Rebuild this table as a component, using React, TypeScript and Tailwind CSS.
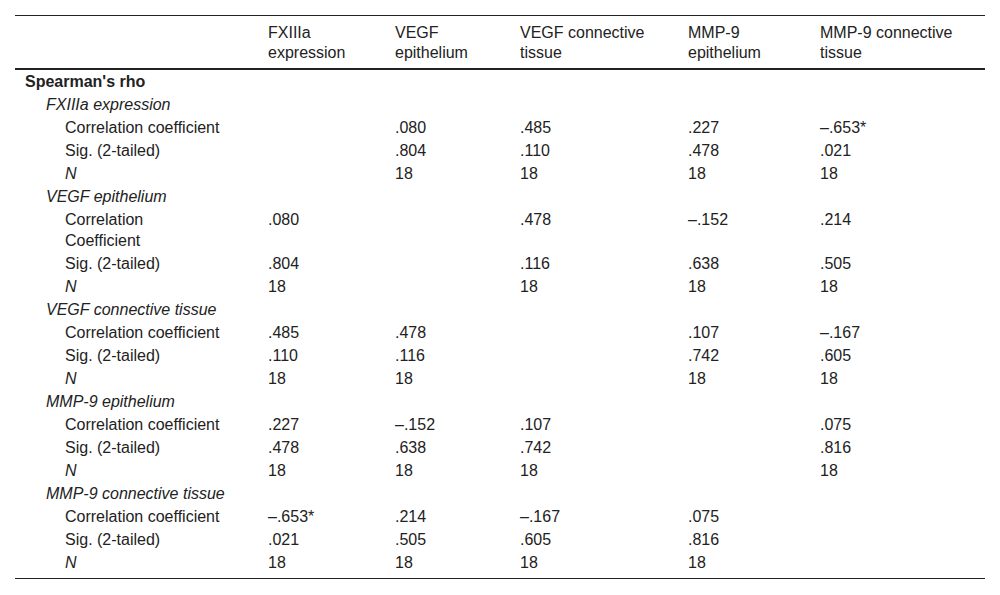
import React from 'react';

type Row = { label: string; italic?: boolean; values: string[] };
type Group = { name: string; rows: Row[] };

const groups: Group[] = [
  {
    name: 'FXIIIa expression',
    rows: [
      { label: 'Correlation coefficient', values: ['', '.080', '.485', '.227', '–.653*'] },
      { label: 'Sig. (2-tailed)', values: ['', '.804', '.110', '.478', '.021'] },
      { label: 'N', italic: true, values: ['', '18', '18', '18', '18'] },
    ],
  },
  {
    name: 'VEGF epithelium',
    rows: [
      { label: 'Correlation\nCoefficient', values: ['.080', '', '.478', '–.152', '.214'] },
      { label: 'Sig. (2-tailed)', values: ['.804', '', '.116', '.638', '.505'] },
      { label: 'N', italic: true, values: ['18', '', '18', '18', '18'] },
    ],
  },
  {
    name: 'VEGF connective tissue',
    rows: [
      { label: 'Correlation coefficient', values: ['.485', '.478', '', '.107', '–.167'] },
      { label: 'Sig. (2-tailed)', values: ['.110', '.116', '', '.742', '.605'] },
      { label: 'N', italic: true, values: ['18', '18', '', '18', '18'] },
    ],
  },
  {
    name: 'MMP-9 epithelium',
    rows: [
      { label: 'Correlation coefficient', values: ['.227', '–.152', '.107', '', '.075'] },
      { label: 'Sig. (2-tailed)', values: ['.478', '.638', '.742', '', '.816'] },
      { label: 'N', italic: true, values: ['18', '18', '18', '', '18'] },
    ],
  },
  {
    name: 'MMP-9 connective tissue',
    rows: [
      { label: 'Correlation coefficient', values: ['–.653*', '.214', '–.167', '.075', ''] },
      { label: 'Sig. (2-tailed)', values: ['.021', '.505', '.605', '.816', ''] },
      { label: 'N', italic: true, values: ['18', '18', '18', '18', ''] },
    ],
  },
];

const headers = [
  ['FXIIIa', 'expression'],
  ['VEGF', 'epithelium'],
  ['VEGF connective', 'tissue'],
  ['MMP-9', 'epithelium'],
  ['MMP-9 connective', 'tissue'],
];

export default function App() {
  return (
    <div className="w-[1000px] h-[595px] bg-white pt-[15px] px-[15px] text-[#222] font-['Liberation_Sans',Arial,sans-serif] text-[16px]">
      <table className="w-[970px] table-fixed border-collapse">
        <colgroup>
          <col className="w-[253px]" />
          <col className="w-[127px]" />
          <col className="w-[125px]" />
          <col className="w-[168px]" />
          <col className="w-[132px]" />
          <col className="w-[165px]" />
        </colgroup>
        <thead>
          <tr className="border-t border-[#222] border-b-2 border-b-[#222]">
            <th />
            {headers.map((h, i) => (
              <th key={i} className="text-left font-normal align-top leading-[20px] pt-[7px] pb-[5px]">
                {h[0]}
                <br />
                {h[1]}
              </th>
            ))}
          </tr>
        </thead>
        <tbody>
          <tr>
            <td colSpan={6} className="pl-[10px] font-bold leading-[21px] py-px">
              Spearman's rho
            </td>
          </tr>
          {groups.map((g, gi) => (
            <React.Fragment key={g.name}>
              <tr>
                <td colSpan={6} className="pl-[31px] italic leading-[21px] py-px">
                  {g.name}
                </td>
              </tr>
              {g.rows.map((r, ri) => {
                const last = gi === groups.length - 1 && ri === g.rows.length - 1;
                return (
                  <tr key={ri} className={last ? 'border-b border-[#222]' : ''}>
                    <td className={`pl-[50px] align-top leading-[21px] pt-px whitespace-pre-line ${last ? 'pb-[5px]' : 'pb-px'} ${r.italic ? 'italic' : ''}`}>
                      {r.label}
                    </td>
                    {r.values.map((v, vi) => (
                      <td key={vi} className={`align-top leading-[21px] pt-px ${last ? 'pb-[5px]' : 'pb-px'}`}>
                        {v}
                      </td>
                    ))}
                  </tr>
                );
              })}
            </React.Fragment>
          ))}
        </tbody>
      </table>
    </div>
  );
}
